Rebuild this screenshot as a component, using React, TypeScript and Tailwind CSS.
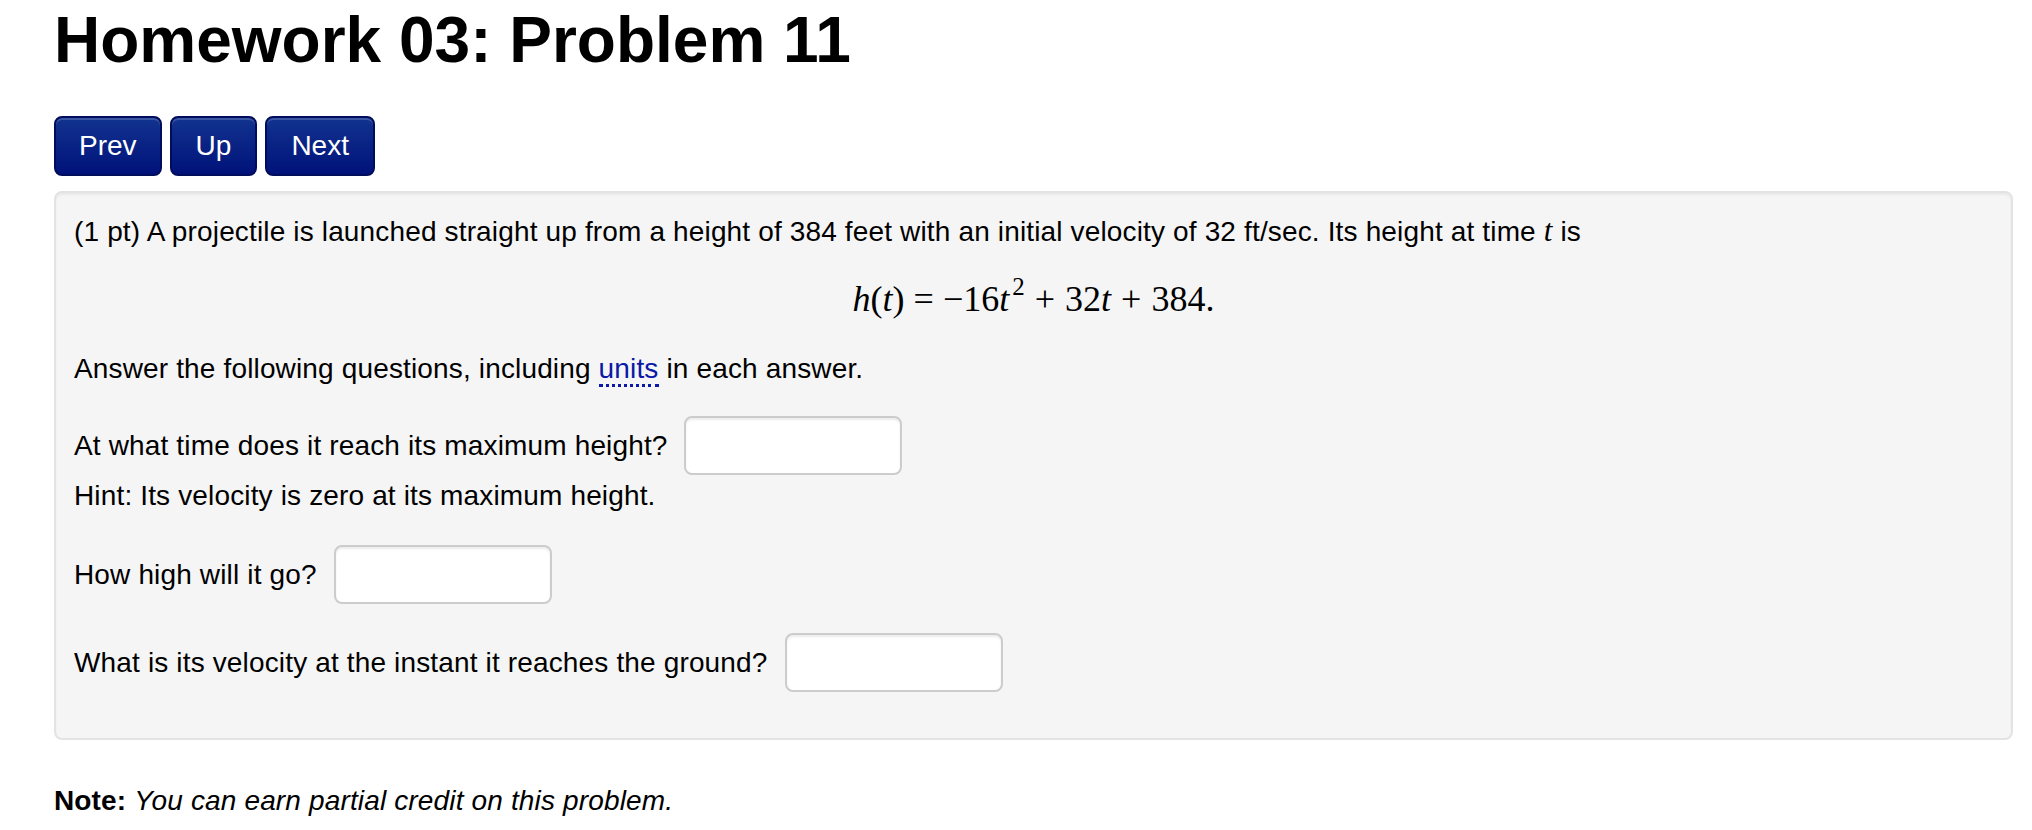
import React from "react";

const sans = { fontFamily: '"Liberation Sans", Arial, Helvetica, sans-serif' };
const serif = { fontFamily: '"Liberation Serif", "Times New Roman", serif' };

function AnswerBox() {
  return (
    <input
      type="text"
      className="h-[59px] w-[218px] shrink-0 rounded-[8px] border-2 border-[#cccccc] bg-white shadow-[inset_0_2px_2px_rgba(0,0,0,0.075)] outline-none"
    />
  );
}

function NavButton({ label, pad }: { label: string; pad: string }) {
  return (
    <button
      className={
        "flex h-[60px] items-center justify-center rounded-[8px] border-2 border-[#000d5c] bg-[linear-gradient(to_bottom,#12338f,#00127a)] text-[28px] leading-[40px] text-white shadow-[inset_0_2px_0_rgba(255,255,255,0.18)] " +
        pad
      }
    >
      {label}
    </button>
  );
}

export default function App() {
  return (
    <div className="min-h-[830px] bg-white pl-[54px] text-black" style={sans}>
      <h1 className="pt-[8px] text-[64px] font-bold leading-[65px]">
        Homework 03: Problem 11
      </h1>

      <div className="mt-[43px] flex gap-[8px]">
        <NavButton label="Prev" pad="px-[23px]" />
        <NavButton label="Up" pad="px-[24px]" />
        <NavButton label="Next" pad="px-[24px]" />
      </div>

      <div className="mt-[15px] w-[1959px] rounded-[8px] border-2 border-[#e3e3e3] bg-[#f5f5f5] pb-[46px] pl-[18px] pr-[18px] pt-[19px] text-[28px] leading-[40px] tracking-[0.15px] shadow-[inset_0_2px_2px_rgba(0,0,0,0.05)]">
        <p>
          (1 pt) A projectile is launched straight up from a height of 384 feet
          with an initial velocity of 32 ft/sec. Its height at time{" "}
          <span className="text-[31px] italic leading-none" style={serif}>
            t
          </span>{" "}
          is
        </p>

        <div className="mt-[27px] flex justify-center text-[36px] leading-[40px] tracking-normal" style={serif}>
          <span className="whitespace-nowrap">
            <span className="italic">h</span>(<span className="italic">t</span>)
            <span className="mx-[9px]">=</span>
            <span>−</span>16
            <span className="italic">t</span>
            <span className="relative -top-[16px] ml-[3px] text-[25px] leading-none">2</span>
            <span className="mx-[10px]">+</span>
            32<span className="italic">t</span>
            <span className="mx-[10px]">+</span>
            384.
          </span>
        </div>

        <p className="mt-[30px]">
          Answer the following questions, including{" "}
          <span className="border-b-[3px] border-dotted border-[#0a19a6] text-[#0a19a6]">
            units
          </span>{" "}
          in each answer.
        </p>

        <div className="mt-[27px] flex items-center gap-[16px]">
          <span>At what time does it reach its maximum height?</span>
          <AnswerBox />
        </div>

        <p className="mt-[1px]">Hint: Its velocity is zero at its maximum height.</p>

        <div className="mt-[29px] flex items-center gap-[17px]">
          <span>How high will it go?</span>
          <AnswerBox />
        </div>

        <div className="mt-[29px] flex items-center gap-[17px]">
          <span>What is its velocity at the instant it reaches the ground?</span>
          <AnswerBox />
        </div>
      </div>

      <p className="mt-[41px] text-[28px] leading-[40px] tracking-[0.15px]">
        <span className="font-bold">Note:</span>{" "}
        <span className="italic">You can earn partial credit on this problem.</span>
      </p>
    </div>
  );
}
